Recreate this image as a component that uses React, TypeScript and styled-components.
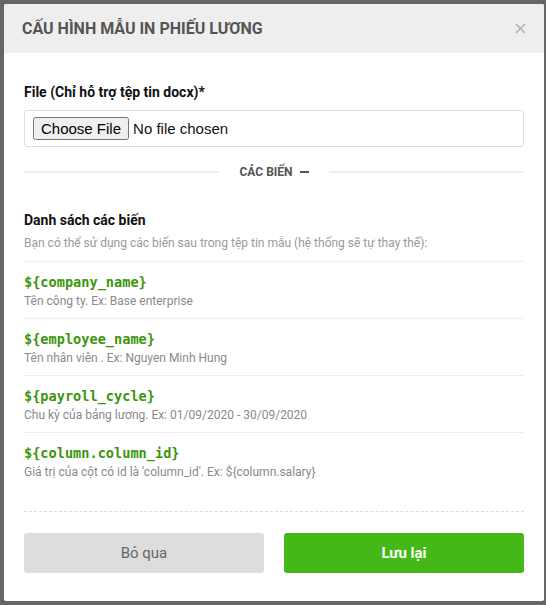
import styled, { createGlobalStyle } from 'styled-components';

const GlobalStyle = createGlobalStyle`
  html, body {
    margin: 0;
    padding: 0;
    background: #666666;
    font-family: Roboto, "Noto Sans", Arial, sans-serif;
  }
  * { box-sizing: border-box; }
`;

const Overlay = styled.div`
  width: 546px;
  height: 605px;
  padding: 4px 2px 4px 4px;
  background: #666666;
`;

const Modal = styled.div`
  width: 540px;
  height: 597px;
  background: #fff;
  border-radius: 2px;
  display: flex;
  flex-direction: column;
  overflow: hidden;
`;

const Header = styled.div`
  height: 49px;
  background: #eeeeee;
  display: flex;
  align-items: center;
  justify-content: space-between;
  padding: 0 16px 0 18px;
  flex: 0 0 auto;
`;

const Title = styled.h2`
  margin: 0;
  font-size: 16px;
  font-weight: 700;
  color: #555;
  text-transform: uppercase;
`;

const Close = styled.button`
  border: 0;
  background: none;
  padding: 0;
  width: 16px;
  height: 16px;
  display: flex;
  align-items: center;
  justify-content: center;
  cursor: pointer;
`;

const Body = styled.div`
  padding: 29px 20px 0;
  flex: 1 1 auto;
`;

const Label = styled.div`
  font-size: 14px;
  line-height: 20px;
  font-weight: 700;
  color: #111;
  margin-bottom: 8px;
`;

const FileBox = styled.div`
  height: 37px;
  border: 1px solid #dddddd;
  border-radius: 3px;
  display: flex;
  align-items: center;
  padding: 0 8px;

  input {
    font-family: "Liberation Sans", Arial, sans-serif;
    font-size: 15px;
    color: #111;
  }
`;

const Divider = styled.div`
  display: flex;
  align-items: center;
  height: 20px;
  margin-top: 15px;

  &::before,
  &::after {
    content: '';
    flex: 1;
    height: 2px;
    background: #eeeeee;
  }
`;

const DividerText = styled.span`
  padding: 0 20px;
  font-size: 12px;
  font-weight: 700;
  color: #555;
  display: flex;
  align-items: center;
  gap: 7px;
`;

const Minus = styled.span`
  display: inline-block;
  width: 9px;
  height: 2px;
  background: #555;
`;

const SectionTitle = styled.div`
  margin-top: 28px;
  font-size: 14px;
  line-height: 20px;
  font-weight: 700;
  color: #111;
`;

const SectionHint = styled.div`
  margin-top: 5px;
  font-size: 12px;
  line-height: 17px;
  color: #9a9a9a;
`;

const VarList = styled.ul`
  list-style: none;
  margin: 9px 0 0;
  padding: 0;
  border-top: 1px solid #eeeeee;
`;

const VarItem = styled.li`
  padding: 10px 0 8px;
  border-bottom: 1px solid #eeeeee;

  &:last-child {
    border-bottom: 0;
  }
`;

const VarCode = styled.code`
  display: block;
  font-family: "DejaVu Sans Mono", "Liberation Mono", monospace;
  font-size: 13.6px;
  line-height: 20px;
  font-weight: 700;
  color: #3c950c;
`;

const VarDesc = styled.div`
  font-size: 12px;
  line-height: 18px;
  color: #8a8a8a;
`;

const Footer = styled.div`
  margin: 0 20px;
  padding: 21px 0 28px;
  border-top: 1px dashed #dddddd;
  display: flex;
  gap: 20px;
  flex: 0 0 auto;
`;

const Button = styled.button<{ $primary?: boolean }>`
  flex: 1;
  height: 40px;
  border: 0;
  border-radius: 3px;
  font-family: Roboto, "Noto Sans", Arial, sans-serif;
  font-size: 15px;
  font-weight: ${(p) => (p.$primary ? 700 : 400)};
  color: ${(p) => (p.$primary ? '#fff' : '#666')};
  background: ${(p) => (p.$primary ? '#44b816' : '#dddddd')};
  cursor: pointer;
`;

const variables = [
  { code: '${company_name}', desc: 'Tên công ty. Ex: Base enterprise' },
  { code: '${employee_name}', desc: 'Tên nhân viên . Ex: Nguyen Minh Hung' },
  { code: '${payroll_cycle}', desc: 'Chu kỳ của bảng lương. Ex: 01/09/2020 - 30/09/2020' },
  { code: '${column.column_id}', desc: "Giá trị của cột có id là 'column_id'. Ex: ${column.salary}" },
];

export default function App() {
  return (
    <>
      <GlobalStyle />
      <Overlay>
        <Modal>
          <Header>
            <Title>Cấu hình mẫu in phiếu lương</Title>
            <Close aria-label="Đóng">
              <svg width="11" height="11" viewBox="0 0 11 11">
                <path d="M1 1L10 10M10 1L1 10" stroke="#b3b3b3" strokeWidth="1.6" />
              </svg>
            </Close>
          </Header>
          <Body>
            <Label>File (Chỉ hỗ trợ tệp tin docx)*</Label>
            <FileBox>
              <input type="file" accept=".docx" />
            </FileBox>
            <Divider>
              <DividerText>
                CÁC BIẾN <Minus />
              </DividerText>
            </Divider>
            <SectionTitle>Danh sách các biến</SectionTitle>
            <SectionHint>
              Bạn có thể sử dụng các biến sau trong tệp tin mẫu (hệ thống sẽ tự thay thế):
            </SectionHint>
            <VarList>
              {variables.map((v) => (
                <VarItem key={v.code}>
                  <VarCode>{v.code}</VarCode>
                  <VarDesc>{v.desc}</VarDesc>
                </VarItem>
              ))}
            </VarList>
          </Body>
          <Footer>
            <Button>Bỏ qua</Button>
            <Button $primary>Lưu lại</Button>
          </Footer>
        </Modal>
      </Overlay>
    </>
  );
}
